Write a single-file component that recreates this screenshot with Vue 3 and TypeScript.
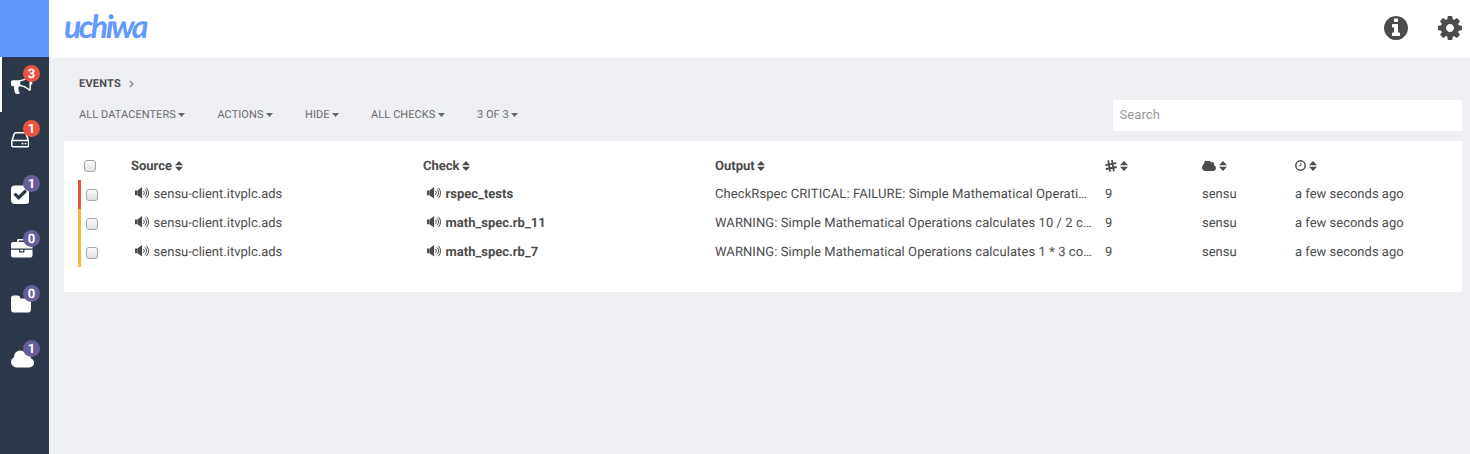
<script setup lang="ts">
interface NavItem { name: string; count: number; alert: boolean; box: string; width: number; path: string }
interface EventRow { status: string; client: string; check: string; output: string; count: number; dc: string; time: string }

const nav: NavItem[] = [
  { name: 'events', count: 3, alert: true, box: '0 0 1792 1792', width: 21.5, path: 'M1664 640q53 0 90.5 37.5t37.5 90.5-37.5 90.5-90.5 37.5v384q0 52-38 90t-90 38q-417-347-812-380-58 19-91 66t-31 100.5 40 92.5q-20 33-23 65.5t6 58 33.5 55 48 50 61.5 50.5q-29 58-111.5 83t-168.5 11.5-132-55.5q-7-23-29.5-87.5t-32-94.5-23-89-15-101 3.5-98.5 22-110.5h-122q-66 0-113-47t-47-113v-192q0-66 47-113t113-47h480q435 0 896-384 52 0 90 38t38 90v384zm-128 604v-954q-394 302-768 343v270q377 42 768 341z' },
  { name: 'clients', count: 1, alert: true, box: '128 0 1536 1792', width: 18.43, path: 'M1168 1216q0 33-23.5 56.5t-56.5 23.5-56.5-23.5-23.5-56.5 23.5-56.5 56.5-23.5 56.5 23.5 23.5 56.5zm256 0q0 33-23.5 56.5t-56.5 23.5-56.5-23.5-23.5-56.5 23.5-56.5 56.5-23.5 56.5 23.5 23.5 56.5zm112 160v-320q0-13-9.5-22.5t-22.5-9.5h-1216q-13 0-22.5 9.5t-9.5 22.5v320q0 13 9.5 22.5t22.5 9.5h1216q13 0 22.5-9.5t9.5-22.5zm-1230-480h1180l-157-482q-4-13-16-21.5t-26-8.5h-782q-14 0-26 8.5t-16 21.5zm1358 160v320q0 66-47 113t-113 47h-1216q-66 0-113-47t-47-113v-320q0-25 16-75l197-606q17-53 63-86t101-33h782q55 0 101 33t63 86l197 606q16 50 16 75z' },
  { name: 'checks', count: 1, alert: false, box: '128 0 1536 1792', width: 18.43, path: 'M813 1299l614-614q19-19 19-45t-19-45l-102-102q-19-19-45-19t-45 19l-467 467-211-211q-19-19-45-19t-45 19l-102 102q-19 19-19 45t19 45l358 358q19 19 45 19t45-19zm851-883v960q0 119-84.5 203.5t-203.5 84.5h-960q-119 0-203.5-84.5t-84.5-203.5v-960q0-119 84.5-203.5t203.5-84.5h960q119 0 203.5 84.5t84.5 203.5z' },
  { name: 'stashes', count: 0, alert: false, box: '0 0 1792 1792', width: 21.5, path: 'M640 256h512v-128h-512v128zm1152 640v480q0 66-47 113t-113 47h-1472q-66 0-113-47t-47-113v-480h672v160q0 26 19 45t45 19h320q26 0 45-19t19-45v-160h672zm-768 0v128h-256v-128h256zm768-480v384h-1792v-384q0-66 47-113t113-47h352v-160q0-40 28-68t68-28h576q40 0 68 28t28 68v160h352q66 0 113 47t47 113z' },
  { name: 'aggregates', count: 0, alert: false, box: '64 0 1664 1792', width: 19.96, path: 'M1728 608v704q0 92-66 158t-158 66h-1216q-92 0-158-66t-66-158v-960q0-92 66-158t158-66h320q92 0 158 66t66 158v32h672q92 0 158 66t66 158z' },
  { name: 'datacenters', count: 1, alert: false, box: '64 0 1920 1792', width: 23.04, path: 'M1984 1152q0 159-112.5 271.5t-271.5 112.5h-1088q-185 0-316.5-131.5t-131.5-316.5q0-132 71-241.5t187-163.5q-2-28-2-43 0-212 150-362t362-150q158 0 286.5 88t187.5 230q70-62 166-62 106 0 181 75t75 181q0 75-41 138 129 30 213 134.5t84 239.5z' },
]

const filters: string[] = ['ALL DATACENTERS', 'ACTIONS', 'HIDE', 'ALL CHECKS', '3 OF 3']
const headings: string[] = ['Source', 'Check', 'Output', 'count', 'dc', 'time']

const rows: EventRow[] = [
  { status: 'critical', client: 'sensu-client.itvplc.ads', check: 'rspec_tests', output: 'CheckRspec CRITICAL: FAILURE: Simple Mathematical Operati…', count: 9, dc: 'sensu', time: 'a few seconds ago' },
  { status: 'warning', client: 'sensu-client.itvplc.ads', check: 'math_spec.rb_11', output: 'WARNING: Simple Mathematical Operations calculates 10 / 2 c…', count: 9, dc: 'sensu', time: 'a few seconds ago' },
  { status: 'warning', client: 'sensu-client.itvplc.ads', check: 'math_spec.rb_7', output: 'WARNING: Simple Mathematical Operations calculates 1 * 3 co…', count: 9, dc: 'sensu', time: 'a few seconds ago' },
]
</script>

<template>
  <div class="app">
    <svg class="defs" width="0" height="0">
      <symbol id="volume" viewBox="0 0 15 12">
        <path d="M0 3.4h2.4v4.8H0zM2.7 3.2L7.1 0v11.6L2.7 8.4z" fill="currentColor" />
        <path d="M8.5 4a2.7 2.7 0 0 1 0 3.8M10 2.3a5 5 0 0 1 0 7.2M11.4.7a7.4 7.4 0 0 1 0 10.4" fill="none" stroke="currentColor" stroke-width="1" />
      </symbol>
    </svg>
    <aside class="sidebar">
      <div class="brand-block"></div>
      <a v-for="(item, i) in nav" :key="item.name" class="nav-item" :class="{ active: i === 0 }">
        <svg :viewBox="item.box" :width="item.width" height="21.5"><path :d="item.path" /></svg>
        <span class="badge" :class="{ alert: item.alert }">{{ item.count }}</span>
      </a>
    </aside>
    <div class="main">
      <header class="topbar">
        <span class="logo">uchiwa</span>
        <div class="tools">
          <svg viewBox="128 128 1536 1536"><path d="M1152 1376v-160q0-14-9-23t-23-9h-96v-512q0-14-9-23t-23-9h-320q-14 0-23 9t-9 23v160q0 14 9 23t23 9h96v320h-96q-14 0-23 9t-9 23v160q0 14 9 23t23 9h448q14 0 23-9t9-23zm-128-896v-160q0-14-9-23t-23-9h-192q-14 0-23 9t-9 23v160q0 14 9 23t23 9h192q14 0 23-9t9-23zm640 416q0 209-103 385.5t-279.5 279.5-385.5 103-385.5-103-279.5-279.5-103-385.5 103-385.5 279.5-279.5 385.5-103 385.5 103 279.5 279.5 103 385.5z" /></svg>
          <svg viewBox="128 128 1536 1536"><path d="M1152 896q0-106-75-181t-181-75-181 75-75 181 75 181 181 75 181-75 75-181zm512-109v222q0 12-8 23t-20 13l-185 28q-19 54-39 91 35 50 107 138 10 12 10 25t-9 23q-27 37-99 108t-94 71q-12 0-26-9l-138-108q-44 23-91 38-16 136-29 186-7 28-36 28h-222q-14 0-24.5-8.5t-11.5-21.5l-28-184q-49-16-90-37l-141 107q-10 9-25 9-14 0-25-11-126-114-165-168-7-10-7-23 0-12 8-23 15-21 51-66.5t54-70.5q-27-50-41-99l-183-27q-13-2-21-12.5t-8-23.5v-222q0-12 8-23t19-13l186-28q14-46 39-92-40-57-107-138-10-12-10-24 0-10 9-23 26-36 98.5-107.5t94.5-71.5q13 0 26 10l138 107q44-23 91-38 16-136 29-186 7-28 36-28h222q14 0 24.5 8.5t11.5 21.5l28 184q49 16 90 37l142-107q9-9 24-9 13 0 25 10 129 119 165 170 7 8 7 22 0 12-8 23-15 21-51 66.5t-54 70.5q26 50 41 98l183 28q13 2 21 12.5t8 23.5z" /></svg>
        </div>
      </header>
      <div class="crumb">
        <span>EVENTS</span>
        <svg width="5" height="8" viewBox="0 0 5 8"><path d="M.8.8L4 4 .8 7.2" fill="none" stroke="#777" stroke-width="1.1" /></svg>
      </div>
      <div class="toolbar">
        <div class="filters">
          <a v-for="f in filters" :key="f" class="filter"><span>{{ f }}</span><svg width="7" height="4" viewBox="0 0 7 4"><path d="M0 0h7L3.5 4z" /></svg></a>
        </div>
        <input class="search" type="text" placeholder="Search" />
      </div>
      <section class="panel">
        <div class="row head">
          <div class="pick"><span class="box"></span></div>
          <div v-for="h in headings" :key="h" class="cell">
            <svg v-if="h === 'count'" width="12" height="12" viewBox="0 0 12 12"><path d="M3.2.4l1.9 11.2M7 .2l1.9 11.2M.3 5.1L11.3 3.1M.8 9l11-2" fill="none" stroke="currentColor" stroke-width="1.8" /></svg>
            <svg v-else-if="h === 'dc'" width="14" height="10" viewBox="64 256 1920 1280" preserveAspectRatio="none"><path :d="nav[5].path" fill="currentColor" /></svg>
            <svg v-else-if="h === 'time'" width="11" height="11" viewBox="0 0 11 11"><circle cx="5.5" cy="5.5" r="4.7" fill="none" stroke="currentColor" stroke-width="1.5" /><path d="M5.8 2.8v3H3.7" fill="none" stroke="currentColor" stroke-width=".9" /></svg>
            <span v-else class="title">{{ h }}</span>
            <svg class="sort" width="8" height="10" viewBox="0 0 8 10"><path d="M0 4.2L4 0l4 4.2zM0 5.8h8L4 10z" fill="currentColor" /></svg>
          </div>
        </div>
        <div v-for="r in rows" :key="r.check" class="row" :class="r.status">
          <div class="pick"><span class="box"></span></div>
          <div class="cell sound"><svg width="15" height="12"><use href="#volume" /></svg><span>{{ r.client }}</span></div>
          <div class="cell sound strong"><svg width="15" height="12"><use href="#volume" /></svg><span>{{ r.check }}</span></div>
          <div class="cell output">{{ r.output }}</div>
          <div class="cell">{{ r.count }}</div>
          <div class="cell dc">{{ r.dc }}</div>
          <div class="cell">{{ r.time }}</div>
        </div>
      </section>
    </div>
  </div>
</template>

<style>
body { margin: 0; background: #eff0f4; }
</style>

<style scoped>
* { box-sizing: border-box; }
.app { display: flex; height: 454px; overflow: hidden; background: #eff0f4; color: #4c4c4c; font: 13px/18px Roboto, sans-serif; letter-spacing: 0; text-rendering: geometricPrecision; }
.defs { position: absolute; }
svg { display: block; flex: none; }
.sidebar { width: 49px; background: #2c3849; flex: none; }
.brand-block { height: 57px; background: #6199fc; }
.nav-item { position: relative; display: flex; align-items: center; height: 55px; padding-left: 11px; fill: #fff; }
.nav-item.active { border-left: 2px solid #fff; padding-left: 9px; }
.badge { position: absolute; top: 8px; right: 9px; width: 17px; height: 17px; border-radius: 50%; background: #685d9b; color: #fff; font-size: 13px; line-height: 19px; font-weight: 700; text-align: center; }
.badge.alert { background: #eb5341; }
.main { flex: 1; min-width: 0; }
.topbar { display: flex; justify-content: space-between; height: 58px; background: #fff; padding: 0 8px 0 15px; }
.logo { color: #6199fc; font: italic 700 32px/38px Lato, sans-serif; padding-top: 7px; letter-spacing: -2.5px; }
.tools { display: flex; gap: 30px; padding-top: 16px; }
.tools svg { width: 24px; height: 24px; fill: #4c4c4c; }
.crumb { display: flex; align-items: center; gap: 8px; height: 42px; padding: 9px 0 0 30px; font-size: 11px; font-weight: 700; letter-spacing: .2px; }
.toolbar { display: flex; justify-content: space-between; height: 41px; padding: 0 8px 0 30px; }
.filters { display: flex; gap: 32px; height: 29px; align-items: center; }
.filter { display: flex; align-items: center; gap: 2.5px; color: #6b6b6b; fill: #666; font-size: 11px; letter-spacing: .07px; }
.search { width: 349px; height: 31px; border: 0; padding: 0 6.5px 2px; background: #fff; font: 13px Roboto, sans-serif; letter-spacing: .1px; }
.search::placeholder { color: #999; opacity: 1; }
.panel { height: 151px; margin: 0 8px 0 15px; padding: 10px 14px 0; background: #fff; }
.row { display: grid; grid-template-columns: 50px 292px 292px 390px 97px 93px 1fr; height: 29px; border-left: 3px solid transparent; }
.row.critical { border-color: #eb5341; }
.row.warning { border-color: #fbb63f; }
.cell { display: flex; align-items: center; white-space: nowrap; }
.head .cell { gap: 3px; font-weight: 700; }
.title { padding-top: 2px; margin-right: -.5px; }
.output { letter-spacing: .08px; }
.sound { gap: 3.6px; padding-left: 4px; }
.sound svg { margin-top: -4px; }
.strong { font-weight: 700; }
.pick { display: flex; align-items: center; padding: 1px 0 0 5px; }
.head .pick { padding: 1px 0 0 3px; }
.box { width: 12px; height: 12px; border: 1px solid #a5a5a5; border-radius: 3px; background: linear-gradient(#fbfbfb, #e1e1e1); }
</style>
